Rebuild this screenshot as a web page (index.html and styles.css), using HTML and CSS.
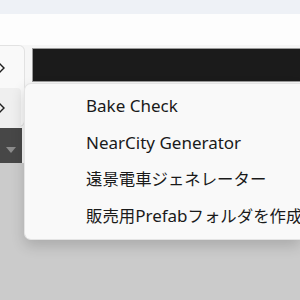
FILE: index.html
```html
<!DOCTYPE html>
<html lang="ja">
<head>
  <meta charset="UTF-8" />
  <title>Tools Menu</title>
  <link rel="stylesheet" href="styles.css">
</head>
<body>
  <div class="tabbar"></div>
  <div class="blank"></div>
  <div class="toolbar">
    <div class="side">
      <div class="side-top"></div>
      <div class="dropdown"><span class="caret"></span></div>
    </div>
    <div class="main">
      <div class="field"></div>
    </div>
  </div>
  <div class="rest"></div>

  <div class="parent-menu">
    <div class="pm-row">
      <svg width="8" height="12" viewBox="0 0 8 12"><path d="M0 1 L5 6 L0 11" fill="none" stroke="#1f1f1f" stroke-width="1.4"/></svg>
    </div>
    <div class="pm-row active">
      <svg width="8" height="12" viewBox="0 0 8 12"><path d="M0 1 L5 6 L0 11" fill="none" stroke="#1f1f1f" stroke-width="1.4"/></svg>
    </div>
  </div>

  <ul class="submenu">
    <li><span class="en">Bake Check</span></li>
    <li><span class="en">NearCity Generator</span></li>
    <li>遠景電車ジェネレーター</li>
    <li>販売用<span class="en">Prefab</span>フォルダを作成</li>
  </ul>
</body>
</html>
```

FILE: styles.css
```css
body { margin: 0; width: 300px; height: 300px; overflow: hidden; background: #cbcbcb; font-family: "Noto Sans CJK JP", "Noto Sans", sans-serif; }
.tabbar { height: 14px; background: #eef1f6; }
.blank { height: 31px; background: #fdfdfd; }
.toolbar { display: flex; height: 118px; background: #f6f6f6; }
.side { width: 22px; display: flex; flex-direction: column; }
.side-top { height: 83px; }
.dropdown { height: 35px; background: #474747; display: flex; justify-content: center; padding-top: 19px; box-sizing: border-box; }
.caret { width: 0; height: 0; border-left: 5px solid transparent; border-right: 5px solid transparent; border-top: 6px solid #8c8c8c; }
.main { flex: 1; padding: 3px 0 0 10px; }
.field { height: 32px; background: #1b1b1b; border: 1px solid #9a9a9a; border-right: none; }
.rest { height: 137px; }

.parent-menu { position: absolute; left: 0; top: 45px; width: 25px; height: 82px; background: #f9f9f9; border: 1px solid #e2e2e2; border-left: none; border-radius: 0 6px 6px 0; padding-top: 2px; box-sizing: border-box; }
.pm-row { height: 40px; display: flex; align-items: center; margin-right: 3px; border-radius: 0 4px 4px 0; }
.pm-row svg { margin-left: -1px; }
.pm-row.active { background: #efefef; }

.submenu { position: absolute; left: 24px; right: 0; top: 83px; margin: 0; padding: 3px 0 6px; list-style: none; background: #f9f9f9; border: 1px solid #e4e4e4; border-right: none; border-radius: 7px 0 0 7px; box-shadow: 0 6px 14px rgba(0,0,0,0.16); overflow: hidden; }
.submenu li { height: 36.5px; line-height: 36px; padding-left: 61px; font-size: 16.4px; color: #1a1a1a; white-space: nowrap; }
.en { font-family: "Noto Sans", sans-serif; font-size: 17px; }
```
